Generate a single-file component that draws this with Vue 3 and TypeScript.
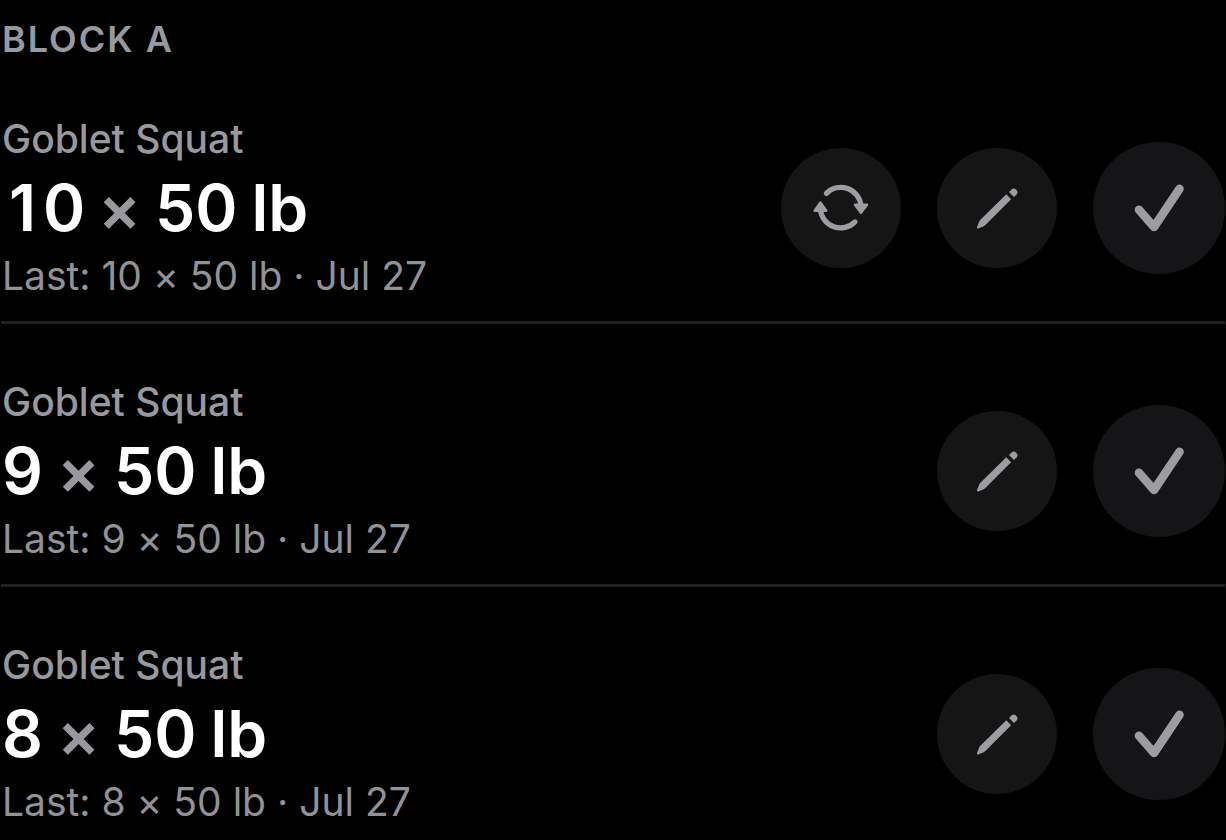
<script setup lang="ts">
interface ExerciseSet {
  id: number
  name: string
  reps: number
  load: number
  unit: string
  lastDate: string
  canSwap: boolean
}

const sets: ExerciseSet[] = [
  { id: 1, name: 'Goblet Squat', reps: 10, load: 50, unit: 'lb', lastDate: 'Jul 27', canSwap: true },
  { id: 2, name: 'Goblet Squat', reps: 9, load: 50, unit: 'lb', lastDate: 'Jul 27', canSwap: false },
  { id: 3, name: 'Goblet Squat', reps: 8, load: 50, unit: 'lb', lastDate: 'Jul 27', canSwap: false },
]
</script>

<template>
  <main class="block">
    <h1 class="block-title">Block A</h1>
    <ul class="sets">
      <li v-for="set in sets" :key="set.id" class="set">
        <div class="details">
          <h2 class="name">{{ set.name }}</h2>
          <p class="target">
            <span class="reps"><span v-for="(digit, i) in String(set.reps)" :key="i" class="digit">{{ digit }}</span></span>
            <span class="times">×</span>
            <span>{{ set.load }}</span>
            <span>{{ set.unit }}</span>
          </p>
          <p class="last">Last: {{ set.reps }} × {{ set.load }} {{ set.unit }} · {{ set.lastDate }}</p>
        </div>
        <div class="actions">
          <button v-if="set.canSwap" type="button" class="action" aria-label="Swap exercise">
            <svg class="icon" viewBox="0 0.5 60 60" aria-hidden="true">
              <g fill="none" stroke="currentColor" stroke-width="5.2" stroke-linecap="round">
                <path d="M15.4 15.8A20.3 20.3 0 0 1 50 28" />
                <path d="M44 44.4A20.3 20.3 0 0 1 9.4 32" />
              </g>
              <g fill="currentColor" stroke="currentColor" stroke-width="2.4" stroke-linejoin="round">
                <path d="M43.9 27.2H56L50 35.3Z" />
                <path d="M3.6 33.3H15.3L9.4 25Z" />
              </g>
            </svg>
          </button>
          <button type="button" class="action" aria-label="Edit set">
            <svg class="icon" viewBox="0 0.5 60 60" aria-hidden="true">
              <g fill="currentColor">
                <path d="M39.3 16.8L44.1 21.8L18.4 47.6Q17.5 48.5 16.2 49L11.2 51Q9.4 51.3 10 49.6L12.2 44Q12.7 42.9 13.6 42Z" />
                <path d="M42 14.6L44.6 12Q46.8 10 49.2 12.2Q51.6 14.6 49.6 16.9L46.9 19.6Z" />
              </g>
            </svg>
          </button>
          <button type="button" class="action complete" aria-label="Complete set">
            <svg class="icon" viewBox="0 0 60 60" aria-hidden="true">
              <path
                d="M10 31.7L25 49L50.5 10.8"
                fill="none"
                stroke="currentColor"
                stroke-width="8.6"
                stroke-linecap="round"
                stroke-linejoin="round"
              />
            </svg>
          </button>
        </div>
      </li>
    </ul>
  </main>
</template>

<style>
body {
  margin: 0;
  background: #000;
}
</style>

<style scoped>
.block {
  box-sizing: border-box;
  min-height: 100vh;
  padding: 18px 1px 0;
  background: #000;
  color: #98989f;
  font-family: Inter, 'Liberation Sans', sans-serif;
  font-feature-settings: 'calt' 0;
}

.block-title {
  margin: 0 0 1px;
  padding-left: 1px;
  font-size: 36px;
  font-weight: 600;
  line-height: 42px;
  letter-spacing: 2px;
  text-transform: uppercase;
}

.sets {
  margin: 0;
  padding: 0;
  list-style: none;
}

.set {
  display: flex;
  align-items: center;
  justify-content: space-between;
  gap: 36px;
  padding: 54px 0 20px;
  border-bottom: 3px solid #202020;
}

.set:last-child {
  padding-bottom: 0;
  border-bottom: 0;
}

.details {
  display: flex;
  flex-direction: column;
  gap: 6px;
  padding: 0 0 2px 1px;
}

.name,
.target,
.last {
  margin: 0;
}

.name {
  font-size: 39px;
  font-weight: 500;
  line-height: 48px;
}

.target {
  display: flex;
  gap: 14px;
  color: #fff;
  font-size: 64px;
  font-weight: 600;
  line-height: 78px;
}

.reps {
  display: flex;
}

/* Equal cells keep rep counts aligned while the 1 keeps its plain shape. */
.digit {
  width: 41px;
  text-align: center;
}

.times {
  color: #98989f;
}

.last {
  color: #929296;
  font-size: 39px;
  font-weight: 400;
  line-height: 46px;
}

.actions {
  display: flex;
  flex-shrink: 0;
  align-items: center;
  gap: 36px;
}

.action {
  display: grid;
  place-items: center;
  width: 120px;
  height: 120px;
  padding: 0;
  border: 0;
  border-radius: 50%;
  background: #151515;
  color: #9c9ca2;
  cursor: pointer;
}

.complete {
  width: 132px;
  height: 132px;
  background: #151517;
}

.icon {
  display: block;
  width: 60px;
  height: 60px;
}
</style>
